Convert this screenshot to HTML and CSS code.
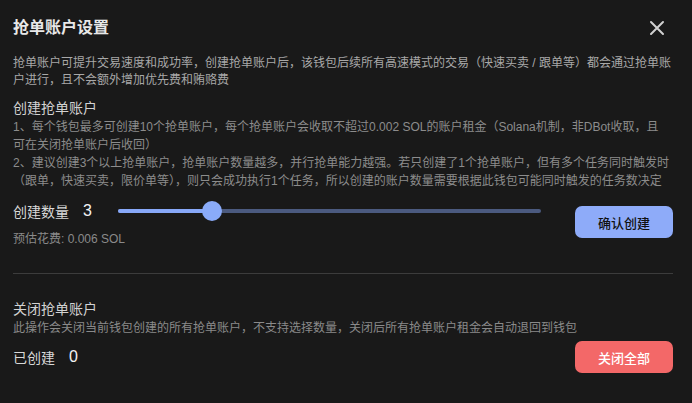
FILE: index.html
```html
<!DOCTYPE html>
<html lang="zh-CN">
<head>
    <meta charset="UTF-8">
    <meta name="viewport" content="width=device-width, initial-scale=1.0">
    <title>抢单账户设置</title>
    <link rel="stylesheet" href="styles.css">
</head>
<body>

    <div class="dialog">
        <div class="dialog-header">
            <h2>抢单账户设置</h2>
            <button class="close-btn" aria-label="关闭">
                <svg width="16" height="16" viewBox="0 0 16 16">
                    <path d="M2 2 L14 14 M14 2 L2 14" stroke="#d0d0d0" stroke-width="2" stroke-linecap="round"/>
                </svg>
            </button>
        </div>

        <p class="intro">抢单账户可提升交易速度和成功率，创建抢单账户后，该钱包后续所有高速模式的交易（快速买卖 / 跟单等）都会通过抢单账户进行，且不会额外增加优先费和贿赂费</p>

        <div class="section">
            <h3>创建抢单账户</h3>
            <p class="note">1、每个钱包最多可创建10个抢单账户，每个抢单账户会收取不超过0.002 SOL的账户租金（Solana机制，非DBot收取，且<br>可在关闭抢单账户后收回）</p>
            <p class="note">2、建议创建3个以上抢单账户，抢单账户数量越多，并行抢单能力越强。若只创建了1个抢单账户，但有多个任务同时触发时（跟单，快速买卖，限价单等），则只会成功执行1个任务，所以创建的账户数量需要根据此钱包可能同时触发的任务数决定</p>

            <div class="create-row">
                <div class="create-left">
                    <div class="count-row">
                        <span class="label">创建数量</span>
                        <span class="value">3</span>
                        <div class="slider">
                            <div class="slider-fill"></div>
                            <div class="slider-thumb"></div>
                        </div>
                    </div>
                    <div class="fee">预估花费: 0.006 SOL</div>
                </div>
                <button class="btn btn-primary">确认创建</button>
            </div>
        </div>

        <hr class="divider">

        <div class="section">
            <h3 class="close-title">关闭抢单账户</h3>
            <p class="hint">此操作会关闭当前钱包创建的所有抢单账户，不支持选择数量，关闭后所有抢单账户租金会自动退回到钱包</p>
            <div class="closed-row">
                <div class="count-row">
                    <span class="label">已创建</span>
                    <span class="value">0</span>
                </div>
                <button class="btn btn-danger">关闭全部</button>
            </div>
        </div>
    </div>

</body>
</html>
```

FILE: styles.css
```css
body {
    margin: 0;
    background-color: #191919;
    font-family: "Liberation Sans", "Noto Sans CJK SC", sans-serif;
    color: #e5e5e5;
}
.dialog {
    width: 660px;
    padding: 17px 19px 0 13px;
}
.dialog-header {
    display: flex;
    justify-content: space-between;
    align-items: center;
    height: 22px;
}
.dialog-header h2 {
    margin: 0;
    font-size: 16px;
    font-weight: 600;
    line-height: 22px;
    color: #e8e8e8;
}
.close-btn {
    background: none;
    border: none;
    padding: 0;
    margin-right: 8px;
    width: 16px;
    height: 16px;
    cursor: pointer;
}
.intro {
    margin: 16px 0 0;
    font-size: 12px;
    line-height: 17px;
    color: #a8a8a8;
}
.section h3 {
    margin: 9px 0 0;
    font-size: 14px;
    font-weight: 400;
    line-height: 20px;
    color: #d2d2d2;
}
.note {
    margin: 0;
    font-size: 12px;
    line-height: 18px;
    color: #8c8c8c;
}
.create-row {
    display: flex;
    justify-content: space-between;
    align-items: flex-start;
    margin-top: 10px;
}
.create-left {
    width: 528px;
}
.count-row {
    display: flex;
    align-items: center;
    height: 22px;
}
.label {
    font-size: 14px;
    color: #d8d8d8;
}
.value {
    width: 35px;
    margin-left: 14px;
    font-size: 16px;
    color: #f2f2f2;
}
.slider {
    position: relative;
    flex: 1;
    height: 4px;
    border-radius: 2px;
    background-color: #4b5a7f;
}
.slider-fill {
    width: 94px;
    height: 4px;
    border-radius: 2px;
    background-color: #87a8f8;
}
.slider-thumb {
    position: absolute;
    left: 84px;
    top: -8px;
    width: 20px;
    height: 20px;
    border-radius: 50%;
    background-color: #8aabf9;
}
.fee {
    margin-top: 9px;
    font-size: 12px;
    line-height: 17px;
    color: #8a8a8a;
}
.btn {
    width: 98px;
    height: 32px;
    border: none;
    border-radius: 7px;
    font-family: "Liberation Sans", "Noto Sans CJK SC", sans-serif;
    font-size: 13px;
    font-weight: 500;
    cursor: pointer;
}
.btn-primary {
    margin-top: 6px;
    background-color: #8eabf9;
    color: #111;
}
.btn-danger {
    background-color: #f36868;
    color: #fff;
}
.divider {
    margin: 25px 0 0;
    border: none;
    border-top: 1px solid #3c3c3c;
}
.section .close-title {
    margin-top: 25px;
}
.hint {
    margin: 1px 0 0;
    font-size: 12px;
    line-height: 17px;
    color: #8a8a8a;
}
.closed-row {
    display: flex;
    justify-content: space-between;
    align-items: center;
    margin-top: 4px;
}
```
